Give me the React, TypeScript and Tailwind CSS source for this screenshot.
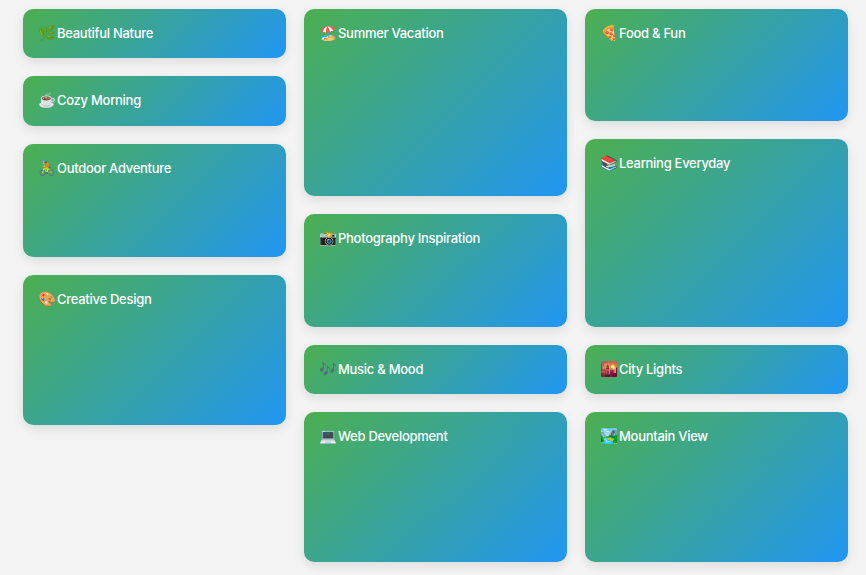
const COLUMNS = [
  [
    { emoji: '🌿', title: 'Beautiful Nature', h: 'h-[49px]' },
    { emoji: '☕', title: 'Cozy Morning', h: 'h-[50px]' },
    { emoji: '🚴', title: 'Outdoor Adventure', h: 'h-[113px]' },
    { emoji: '🎨', title: 'Creative Design', h: 'h-[150px]' },
  ],
  [
    { emoji: '🏖️', title: 'Summer Vacation', h: 'h-[187px]' },
    { emoji: '📸', title: 'Photography Inspiration', h: 'h-[113px]' },
    { emoji: '🎶', title: 'Music & Mood', h: 'h-[49px]' },
    { emoji: '💻', title: 'Web Development', h: 'h-[150px]' },
  ],
  [
    { emoji: '🍕', title: 'Food & Fun', h: 'h-[112px]' },
    { emoji: '📚', title: 'Learning Everyday', h: 'h-[188px]' },
    { emoji: '🌇', title: 'City Lights', h: 'h-[49px]' },
    { emoji: '🏞️', title: 'Mountain View', h: 'h-[150px]' },
  ],
];

export default function App() {
  return (
    <div className="min-h-[575px] bg-[#f4f4f4] pt-[9px] pr-[18px] pl-[23px] font-['Inter',sans-serif]">
      <div className="grid grid-cols-3 gap-[18px]">
        {COLUMNS.map((col, i) => (
          <div key={i} className="flex flex-col gap-[18px]">
            {col.map((card) => (
              <div
                key={card.title}
                className={`${card.h} flex items-start rounded-[10px] bg-[linear-gradient(135deg,#4caf50,#2196f3)] p-[15px] text-[13px] leading-[18px] font-[450] tracking-[-0.28px] text-white shadow-[0_4px_12px_rgba(0,0,0,0.1)]`}
              >
                <span className="w-[19px] shrink-0 text-[14.5px] tracking-normal">{card.emoji}</span>
                <span>{card.title}</span>
              </div>
            ))}
          </div>
        ))}
      </div>
    </div>
  );
}
